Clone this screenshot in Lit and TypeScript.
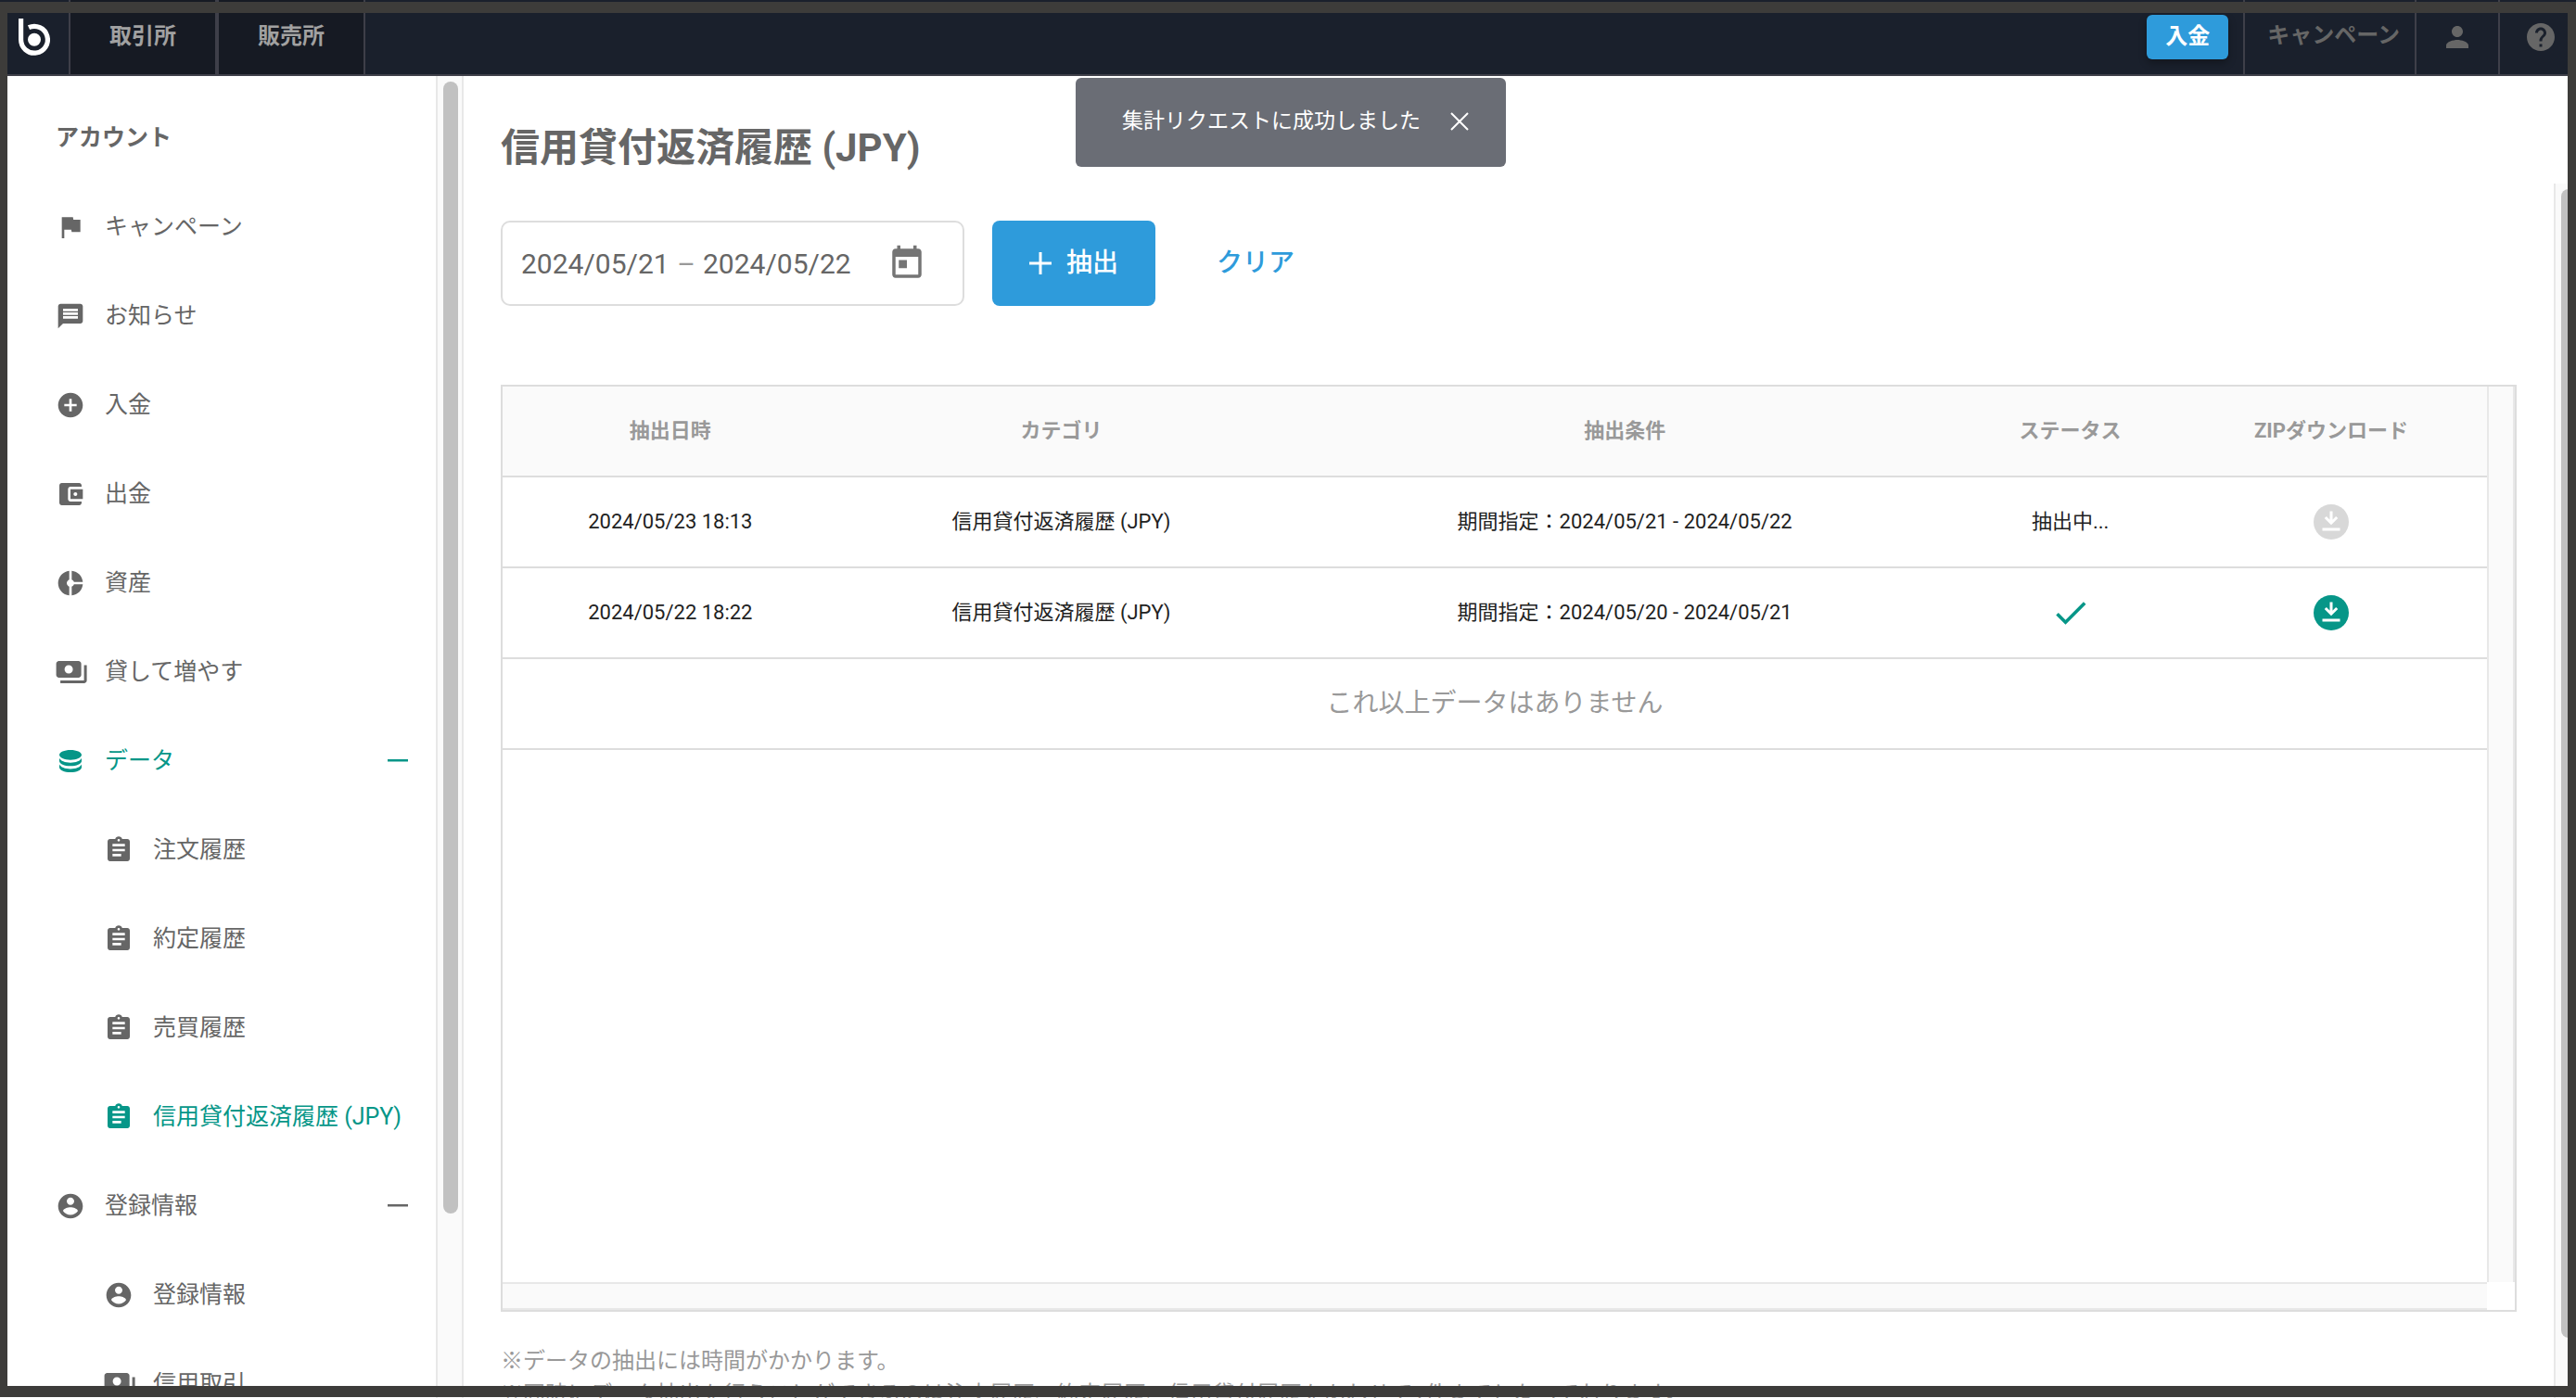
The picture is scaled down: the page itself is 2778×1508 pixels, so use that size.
import { LitElement, html, css, svg, nothing, type SVGTemplateResult } from "lit";
import { customElement, property } from "lit/decorators.js";
import { classMap } from "lit/directives/class-map.js";

interface Icon {
  box: string;
  body: SVGTemplateResult;
}

const fill24 = (d: string, box = "0 0 24 24"): Icon => ({ box, body: svg`<path d=${d} />` });

const PAYMENTS =
  "M19 14V6c0-1.1-.9-2-2-2H3c-1.1 0-2 .9-2 2v8c0 1.1.9 2 2 2h14c1.1 0 2-.9 2-2zm-9-1c-1.66 0-3-1.34-3-3s1.34-3 3-3 3 1.34 3 3-1.34 3-3 3zm13-6v11c0 1.1-.9 2-2 2H4v-2h17V7h2z";

const ICONS: Record<string, Icon> = {
  logo: {
    box: "0 0 34 40",
    body: svg`<path d="M2.6 0V22.8A14.4 14.4 0 1 0 11 9.7" fill="none" stroke="currentColor" stroke-width="5.2" /><circle cx="17" cy="22.8" r="7" />`,
  },
  flag: fill24("M14.4 6L14 4H5v17h2v-7h5.6l.4 2h7V6z"),
  message: fill24(
    "M20 2H4c-1.1 0-1.99.9-1.99 2L2 22l4-4h14c1.1 0 2-.9 2-2V4c0-1.1-.9-2-2-2zm-2 12H6v-2h12v2zm0-3H6V9h12v2zm0-3H6V6h12v2z",
  ),
  deposit: fill24("M12 2C6.48 2 2 6.48 2 12s4.48 10 10 10 10-4.48 10-10S17.52 2 12 2zm5 11h-4v4h-2v-4H7v-2h4V7h2v4h4v2z"),
  wallet: fill24(
    "M21 18v1c0 1.1-.9 2-2 2H5c-1.11 0-2-.9-2-2V5c0-1.1.89-2 2-2h14c1.1 0 2 .9 2 2v1h-9c-1.11 0-2 .9-2 2v8c0 1.1.89 2 2 2h9zm-9-2h10V8H12v8zm4-2.5c-.83 0-1.5-.67-1.5-1.5s.67-1.5 1.5-1.5 1.5.67 1.5 1.5-.67 1.5-1.5 1.5z",
  ),
  donut: fill24(
    "M11 9.16V2c-5 .5-9 4.79-9 10s4 9.5 9 10v-7.16c-1-.41-2-1.52-2-2.84s1-2.43 2-2.84zM14.86 11H22c-.48-4.75-4-8.53-9-9v7.16c1 .3 1.52.98 1.86 1.84zM13 14.84V22c5-.47 8.52-4.25 9-9h-7.14c-.34.86-.86 1.54-1.86 1.84z",
  ),
  payments: fill24(PAYMENTS, "0.6 1.33 21.33 21.33"),
  database: fill24(
    "M12 3C7 3 3 4.79 3 7s4 4 9 4 9-1.79 9-4-4-4-9-4zM3 9.6V12c0 2.21 4 4 9 4s9-1.79 9-4V9.6c-1 2.3-4.6 3.7-9 3.7s-8-1.4-9-3.7zM3 14.6V17c0 2.21 4 4 9 4s9-1.79 9-4v-2.4c-1 2.3-4.6 3.7-9 3.7s-8-1.4-9-3.7z",
  ),
  clipboard: fill24(
    "M19 3h-4.18C14.4 1.84 13.3 1 12 1c-1.3 0-2.4.84-2.82 2H5c-1.1 0-2 .9-2 2v14c0 1.1.9 2 2 2h14c1.1 0 2-.9 2-2V5c0-1.1-.9-2-2-2zm-7 0c.55 0 1 .45 1 1s-.45 1-1 1-1-.45-1-1 .45-1 1-1zm2 14H7v-2h7v2zm3-4H7v-2h10v2zm0-4H7V7h10v2z",
  ),
  account: fill24(
    "M12 2C6.48 2 2 6.48 2 12s4.48 10 10 10 10-4.48 10-10S17.52 2 12 2zm0 3c1.66 0 3 1.34 3 3s-1.34 3-3 3-3-1.34-3-3 1.34-3 3-3zm0 14.2c-2.5 0-4.71-1.28-6-3.22.03-1.99 4-3.08 6-3.08 1.99 0 5.97 1.09 6 3.08-1.29 1.94-3.5 3.22-6 3.22z",
  ),
  person: fill24("M12 12c2.21 0 4-1.79 4-4s-1.79-4-4-4-4 1.79-4 4 1.79 4 4 4zm0 2c-2.67 0-8 1.34-8 4v2h16v-2c0-2.66-5.33-4-8-4z"),
  help: fill24(
    "M12 2C6.48 2 2 6.48 2 12s4.48 10 10 10 10-4.48 10-10S17.52 2 12 2zm1 17h-2v-2h2v2zm2.07-7.75l-.9.92C13.45 12.9 13 13.5 13 15h-2v-.5c0-1.1.45-2.1 1.17-2.83l1.24-1.26c.37-.36.59-.86.59-1.41 0-1.1-.9-2-2-2s-2 .9-2 2H8c0-2.21 1.79-4 4-4s4 1.79 4 4c0 .88-.36 1.68-.93 2.25z",
  ),
  today: fill24(
    "M19 3h-1V1h-2v2H8V1H6v2H5c-1.11 0-1.99.9-1.99 2L3 19c0 1.1.89 2 2 2h14c1.1 0 2-.9 2-2V5c0-1.1-.9-2-2-2zm0 16H5V8h14v11zM7 10h5v5H7z",
  ),
  check: fill24("M9 16.17L4.83 12l-1.42 1.41L9 19 21 7l-1.41-1.41z"),
  minus: { box: "0 0 22 22", body: svg`<path d="M0 9h22v2.500H0z" />` },
  plus: { box: "0 0 24 24", body: svg`<path d="M10.5 0h3v10.500h10.500v3H13.500V24h-3V13.500H0v-3h10.500z" />` },
  close: {
    box: "0 0 20 20",
    body: svg`<path d="M1 1L19 19M19 1L1 19" fill="none" stroke="currentColor" stroke-width="2" />`,
  },
  download: {
    box: "0 0 38 38",
    body: svg`<circle cx="19" cy="19" r="19" /><path d="M19 7.500V20M12.800 14L19 20.200L25.200 14M9.500 27H28.500" fill="none" stroke="#fff" stroke-width="3" />`,
  },
};

@customElement("ui-icon")
class UiIcon extends LitElement {
  @property() name = "";
  @property({ type: Number }) size = 32;

  static styles = css`
    :host {
      display: inline-flex;
      flex: none;
    }
    svg {
      display: block;
      overflow: visible;
      fill: currentColor;
    }
  `;

  render() {
    const icon = ICONS[this.name];
    return icon
      ? html`<svg width=${this.size} height=${this.size} viewBox=${icon.box} aria-hidden="true">${icon.body}</svg>`
      : nothing;
  }
}

interface NavItem {
  icon: string;
  label: string;
  sub?: boolean;
  active?: boolean;
  expanded?: boolean;
}

const NAV: NavItem[] = [
  { icon: "flag", label: "キャンペーン" },
  { icon: "message", label: "お知らせ" },
  { icon: "deposit", label: "入金" },
  { icon: "wallet", label: "出金" },
  { icon: "donut", label: "資産" },
  { icon: "payments", label: "貸して増やす" },
  { icon: "database", label: "データ", active: true, expanded: true },
  { icon: "clipboard", label: "注文履歴", sub: true },
  { icon: "clipboard", label: "約定履歴", sub: true },
  { icon: "clipboard", label: "売買履歴", sub: true },
  { icon: "clipboard", label: "信用貸付返済履歴 (JPY)", sub: true, active: true },
  { icon: "account", label: "登録情報", expanded: true },
  { icon: "account", label: "登録情報", sub: true },
  { icon: "payments", label: "信用取引", sub: true },
];

interface Extraction {
  date: string;
  category: string;
  condition: string;
  done: boolean;
}

const ROWS: Extraction[] = [
  {
    date: "2024/05/23 18:13",
    category: "信用貸付返済履歴 (JPY)",
    condition: "期間指定：2024/05/21 - 2024/05/22",
    done: false,
  },
  {
    date: "2024/05/22 18:22",
    category: "信用貸付返済履歴 (JPY)",
    condition: "期間指定：2024/05/20 - 2024/05/21",
    done: true,
  },
];

@customElement("app-root")
class AppRoot extends LitElement {
  static styles = css`
    :host {
      --ink: #666;
      --muted: #999;
      --teal: #069688;
      --blue: #2e9bdb;
      --line: #ddd;
      --track: #fafafa;
      --track-line: #e8e8e8;
      --thumb: #c1c1c1;
      position: relative;
      display: flex;
      flex-direction: column;
      height: 100vh;
      overflow: hidden;
      background: #fff;
      color: var(--ink);
      font-family: Roboto, "Noto Sans CJK JP", sans-serif;
      font-size: 24px;
      line-height: 36px;
    }
    * {
      box-sizing: border-box;
    }
    button,
    input {
      font: inherit;
      color: inherit;
      border: 0;
      padding: 0;
      margin: 0;
      background: none;
    }
    a {
      color: inherit;
      text-decoration: none;
    }
    h1,
    h2,
    p {
      margin: 0;
    }

    .frame {
      position: absolute;
      inset: 2px 0 1px 0;
      z-index: 3;
      border: solid #3d3c3a;
      border-width: 12px 9px 12px 8px;
      pointer-events: none;
    }

    .topbar {
      flex: none;
      display: flex;
      height: 82px;
      background: #1a202c;
      border-bottom: 2px solid #3e3f49;
      font-weight: 700;
    }
    .brand,
    .cell,
    .tab {
      display: flex;
      align-items: center;
      justify-content: center;
    }
    .brand {
      width: 74px;
      color: #fff;
    }
    .tab {
      width: 160px;
      padding-bottom: 2px;
      border: solid #3e3f49;
      border-width: 0 2px;
      background: #161a23;
      color: #a1a1a1;
    }
    .actions {
      display: flex;
      align-items: center;
      margin-left: auto;
    }
    .deposit {
      width: 88px;
      height: 48px;
      margin-right: 16px;
      padding-bottom: 2px;
      border-radius: 6px;
      background: var(--blue);
      color: #fff;
      font-weight: 700;
      box-shadow: 0 4px 8px rgba(0, 0, 0, 0.3);
    }
    .cell {
      align-self: stretch;
      width: 90px;
      border-left: 2px solid #3e3f49;
    }
    .cell.wide {
      width: auto;
      padding: 0 16px 4px 24px;
    }
    .cell.last {
      width: 84px;
      padding-left: 6px;
    }

    .body {
      flex: 1;
      min-height: 0;
      display: flex;
    }
    .sidebar {
      flex: none;
      width: 470px;
      padding: 19px 30px 0 60px;
      overflow: hidden;
      font-size: 25px;
    }
    .sidebar h2 {
      font-size: 25px;
      font-weight: 700;
      line-height: 96px;
    }
    .item {
      display: flex;
      align-items: center;
      gap: 21px;
      height: 96px;
      white-space: nowrap;
    }
    .item.sub {
      padding-left: 52px;
      margin-right: -30px;
    }
    .item.active {
      color: var(--teal);
    }
    .toggle {
      display: flex;
      margin-left: auto;
    }

    .vbar {
      flex: none;
      width: 30px;
      padding: 6px;
      padding-bottom: 0;
      background: var(--track);
      border: solid var(--track-line);
      border-width: 0 2px;
      overflow: hidden;
    }
    .thumb {
      width: 16px;
      border-radius: 8px;
      background: var(--thumb);
    }
    .vbar.nav .thumb {
      height: 86%;
    }
    .vbar.page {
      width: 24px;
      margin-top: 116px;
      border-right: 0;
    }
    .vbar.page .thumb {
      height: 95%;
    }

    .main {
      flex: 1;
      min-width: 0;
      padding: 47px 40px 0;
      overflow: hidden;
    }
    h1 {
      font-size: 42px;
      font-weight: 700;
      line-height: 62px;
    }
    .filters {
      display: flex;
      align-items: center;
      margin-top: 47px;
      height: 92px;
    }
    .range {
      display: flex;
      align-items: center;
      justify-content: space-between;
      width: 500px;
      height: 92px;
      padding: 0 39px 0 20px;
      border: 2px solid var(--line);
      border-radius: 10px;
      font-size: 30px;
    }
    .dates {
      display: flex;
      align-items: center;
      padding-top: 2px;
    }
    .dates input {
      width: 160px;
      outline: none;
    }
    .dates span {
      width: 36px;
      text-align: center;
      color: var(--muted);
      font-size: 30px;
    }
    .pick {
      display: flex;
      color: #757575;
    }
    .extract {
      display: flex;
      align-items: center;
      justify-content: center;
      gap: 16px;
      width: 176px;
      height: 92px;
      margin-left: 30px;
      border-radius: 8px;
      background: var(--blue);
      color: #fff;
      font-size: 28px;
      font-weight: 500;
    }
    .clear {
      margin-left: 66px;
      color: var(--blue);
      font-size: 28px;
      font-weight: 500;
    }

    .panel {
      display: grid;
      grid-template: minmax(0, 1fr) 30px / minmax(0, 1fr) 30px;
      height: 1000px;
      margin-top: 85px;
      border: 2px solid var(--line);
    }
    .hbar {
      background: var(--track);
      border: solid var(--track-line);
      border-width: 2px 0;
    }
    table {
      width: 100%;
      border-collapse: separate;
      border-spacing: 0;
      table-layout: fixed;
      color: #222;
      font-size: 22px;
      text-align: center;
    }
    th,
    td {
      height: 98px;
      padding: 0;
      border-bottom: 2px solid var(--line);
      vertical-align: middle;
    }
    th {
      background: var(--track);
      color: var(--muted);
      font-weight: 700;
    }
    .c1 {
      width: 16.9%;
    }
    .c2 {
      width: 22.5%;
    }
    .c3 {
      width: 34.3%;
    }
    .c4 {
      width: 10.6%;
    }
    .status,
    .download {
      display: flex;
      justify-content: center;
      margin: 0 auto;
      color: var(--teal);
    }
    .download:disabled {
      color: #d8d8d8;
    }
    .end {
      color: var(--muted);
      font-size: 28px;
    }
    .notes {
      margin-top: 35px;
      color: var(--muted);
      white-space: nowrap;
    }

    .toast {
      position: absolute;
      top: 84px;
      left: calc(50% + 3px);
      z-index: 2;
      display: flex;
      align-items: center;
      gap: 32px;
      height: 96px;
      padding: 0 40px 2px 50px;
      transform: translateX(-50%);
      border-radius: 6px;
      background: #6a6d75;
      color: #fff;
      font-size: 23px;
      white-space: nowrap;
    }
    .toast button {
      display: flex;
    }
  `;

  private navItem(item: NavItem) {
    const classes = { item: true, sub: !!item.sub, active: !!item.active };
    return html`
      <a href="#" class=${classMap(classes)}>
        <ui-icon name=${item.icon}></ui-icon>
        <span>${item.label}</span>
        ${item.expanded ? html`<span class="toggle"><ui-icon name="minus" size="22"></ui-icon></span>` : nothing}
      </a>
    `;
  }

  private row(row: Extraction) {
    return html`
      <tr>
        <td>${row.date}</td>
        <td>${row.category}</td>
        <td>${row.condition}</td>
        <td>${row.done ? html`<span class="status"><ui-icon name="check" size="44"></ui-icon></span>` : "抽出中..."}</td>
        <td>
          <button class="download" aria-label="ZIPダウンロード" ?disabled=${!row.done}>
            <ui-icon name="download" size="38"></ui-icon>
          </button>
        </td>
      </tr>
    `;
  }

  render() {
    return html`
      <header class="topbar">
        <a class="brand" href="#" aria-label="ホーム"><ui-icon name="logo" size="40"></ui-icon></a>
        <a class="tab" href="#">取引所</a>
        <a class="tab" href="#">販売所</a>
        <div class="actions">
          <button class="deposit">入金</button>
          <a class="cell wide" href="#">キャンペーン</a>
          <button class="cell" aria-label="アカウント"><ui-icon name="person" size="36"></ui-icon></button>
          <button class="cell last" aria-label="ヘルプ"><ui-icon name="help" size="36"></ui-icon></button>
        </div>
      </header>

      <div class="body">
        <nav class="sidebar">
          <h2>アカウント</h2>
          ${NAV.map((item) => this.navItem(item))}
        </nav>
        <div class="vbar nav"><div class="thumb"></div></div>

        <main class="main">
          <h1>信用貸付返済履歴 (JPY)</h1>
          <div class="filters">
            <div class="range">
              <div class="dates">
                <input type="text" aria-label="開始日" .value=${"2024/05/21"} />
                <span>–</span>
                <input type="text" aria-label="終了日" .value=${"2024/05/22"} />
              </div>
              <button class="pick" aria-label="日付を選択"><ui-icon name="today" size="42"></ui-icon></button>
            </div>
            <button class="extract"><ui-icon name="plus" size="24"></ui-icon>抽出</button>
            <button class="clear">クリア</button>
          </div>

          <section class="panel">
            <div>
              <table>
                <thead>
                  <tr>
                    <th class="c1">抽出日時</th>
                    <th class="c2">カテゴリ</th>
                    <th class="c3">抽出条件</th>
                    <th class="c4">ステータス</th>
                    <th>ZIPダウンロード</th>
                  </tr>
                </thead>
                <tbody>
                  ${ROWS.map((row) => this.row(row))}
                  <tr>
                    <td class="end" colspan="5">これ以上データはありません</td>
                  </tr>
                </tbody>
              </table>
            </div>
            <div class="vbar"></div>
            <div class="hbar"></div>
          </section>

          <div class="notes">
            <p>※データの抽出には時間がかかります。</p>
            <p>※同時にデータ抽出を行うことができるのは注文履歴、約定履歴、信用貸付履歴をあわせて1件までとなっております。</p>
          </div>
        </main>
        <div class="vbar page"><div class="thumb"></div></div>
      </div>

      <div class="toast" role="status">
        <span>集計リクエストに成功しました</span>
        <button aria-label="閉じる"><ui-icon name="close" size="20"></ui-icon></button>
      </div>
      <div class="frame"></div>
    `;
  }
}
